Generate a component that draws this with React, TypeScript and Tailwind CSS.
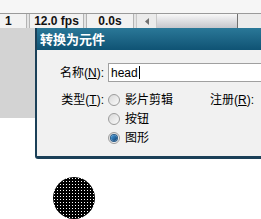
function Radio({ checked }: { checked?: boolean }) {
  return (
    <span className="relative flex h-[12px] w-[12px] items-center justify-center rounded-full border border-[#9c9c9c] bg-gradient-to-br from-[#d8d8d8] to-[#fbfbfb]">
      {checked && (
        <span className="h-[6px] w-[6px] rounded-full bg-gradient-to-br from-[#4aa0e0] to-[#0c3f72] shadow-[0_0_0_1px_#2a5d8a]" />
      )}
    </span>
  );
}

export default function App() {
  return (
    <div className="relative h-[219px] w-[261px] overflow-hidden bg-white font-['Liberation_Sans','Noto_Sans_CJK_SC',sans-serif] text-[12px] leading-none text-black">
      <div className="h-[13px] bg-[#f6f6f6]" />
      <div className="flex h-[15px] border-t border-[#9a9a9a] bg-[#e4e4e4] font-bold text-[#111]">
        <div className="flex w-[27px] items-center border-r border-[#b4b4b4] bg-[#f2f2f2] pl-[5px]">1</div>
        <div className="ml-[2px] flex w-[55px] items-center justify-center border-x border-[#b4b4b4] bg-[#f2f2f2]">12.0 fps</div>
        <div className="ml-[2px] flex w-[48px] items-center justify-center border-x border-[#b4b4b4] bg-[#f2f2f2]">0.0s</div>
        <div className="ml-[2px] flex flex-1 bg-[#ebebeb]">
          <div className="flex w-[20px] items-center justify-center border-l border-[#c8c8c8]">
            <svg width="4" height="7" viewBox="0 0 4 7">
              <path d="M4 0 L0 3.5 L4 7 Z" fill="#707070" />
            </svg>
          </div>
          <div className="w-[82px] border-x border-r-[#707070] border-l-[#c8c8c8] bg-gradient-to-b from-[#f8f8f8] to-[#c6c6cc]" />
          <div className="flex-1 bg-[#ececec]" />
        </div>
      </div>
      <div className="h-[90px] w-[35px] bg-[#d3d3d3]" />

      <div className="absolute left-[35px] top-[28px] flex h-[131px] w-[240px] flex-col rounded-bl-[3px] border-b-[3px] border-l-[2px] border-[#1b4058]">
        <div className="flex h-[22px] items-center bg-gradient-to-b from-[#2a7898] to-[#0f5374] pl-[3px] text-[13px] font-bold text-white">
          转换为元件
        </div>
        <div className="flex-1 bg-[#f1f1f1] pt-[13px]">
          <div className="flex h-[19px] items-center">
            <div className="w-[67px] text-right">
              名称(<span className="underline">N</span>):
            </div>
            <div className="ml-[4px] flex h-[19px] flex-1 items-center border border-[#a0a0a0] bg-white pl-[2px]">
              head
              <span className="ml-[1px] h-[13px] w-[1px] bg-black" />
            </div>
          </div>
          <div className="mt-[9px] flex">
            <div className="flex h-[18px] w-[67px] items-center justify-end">
              类型(<span className="underline">T</span>):
            </div>
            <div className="ml-[4px] flex w-[102px] flex-col">
              <div className="flex h-[18px] items-center gap-[5px]">
                <Radio />
                影片剪辑
              </div>
              <div className="flex h-[19px] items-center gap-[5px]">
                <Radio />
                按钮
              </div>
              <div className="flex h-[19px] items-center gap-[5px]">
                <Radio checked />
                图形
              </div>
            </div>
            <div className="flex h-[18px] items-center">
              注册(<span className="underline">R</span>):
            </div>
          </div>
        </div>
      </div>

      <svg className="absolute left-[53px] top-[177px]" width="42" height="42" viewBox="0 0 42 42">
        <defs>
          <pattern id="dots" width="3" height="3" patternUnits="userSpaceOnUse">
            <rect width="3" height="3" fill="#000" />
            <rect x="1" y="1" width="1" height="1" fill="#fff" />
          </pattern>
        </defs>
        <circle cx="21" cy="21" r="21" fill="url(#dots)" />
      </svg>
    </div>
  );
}
